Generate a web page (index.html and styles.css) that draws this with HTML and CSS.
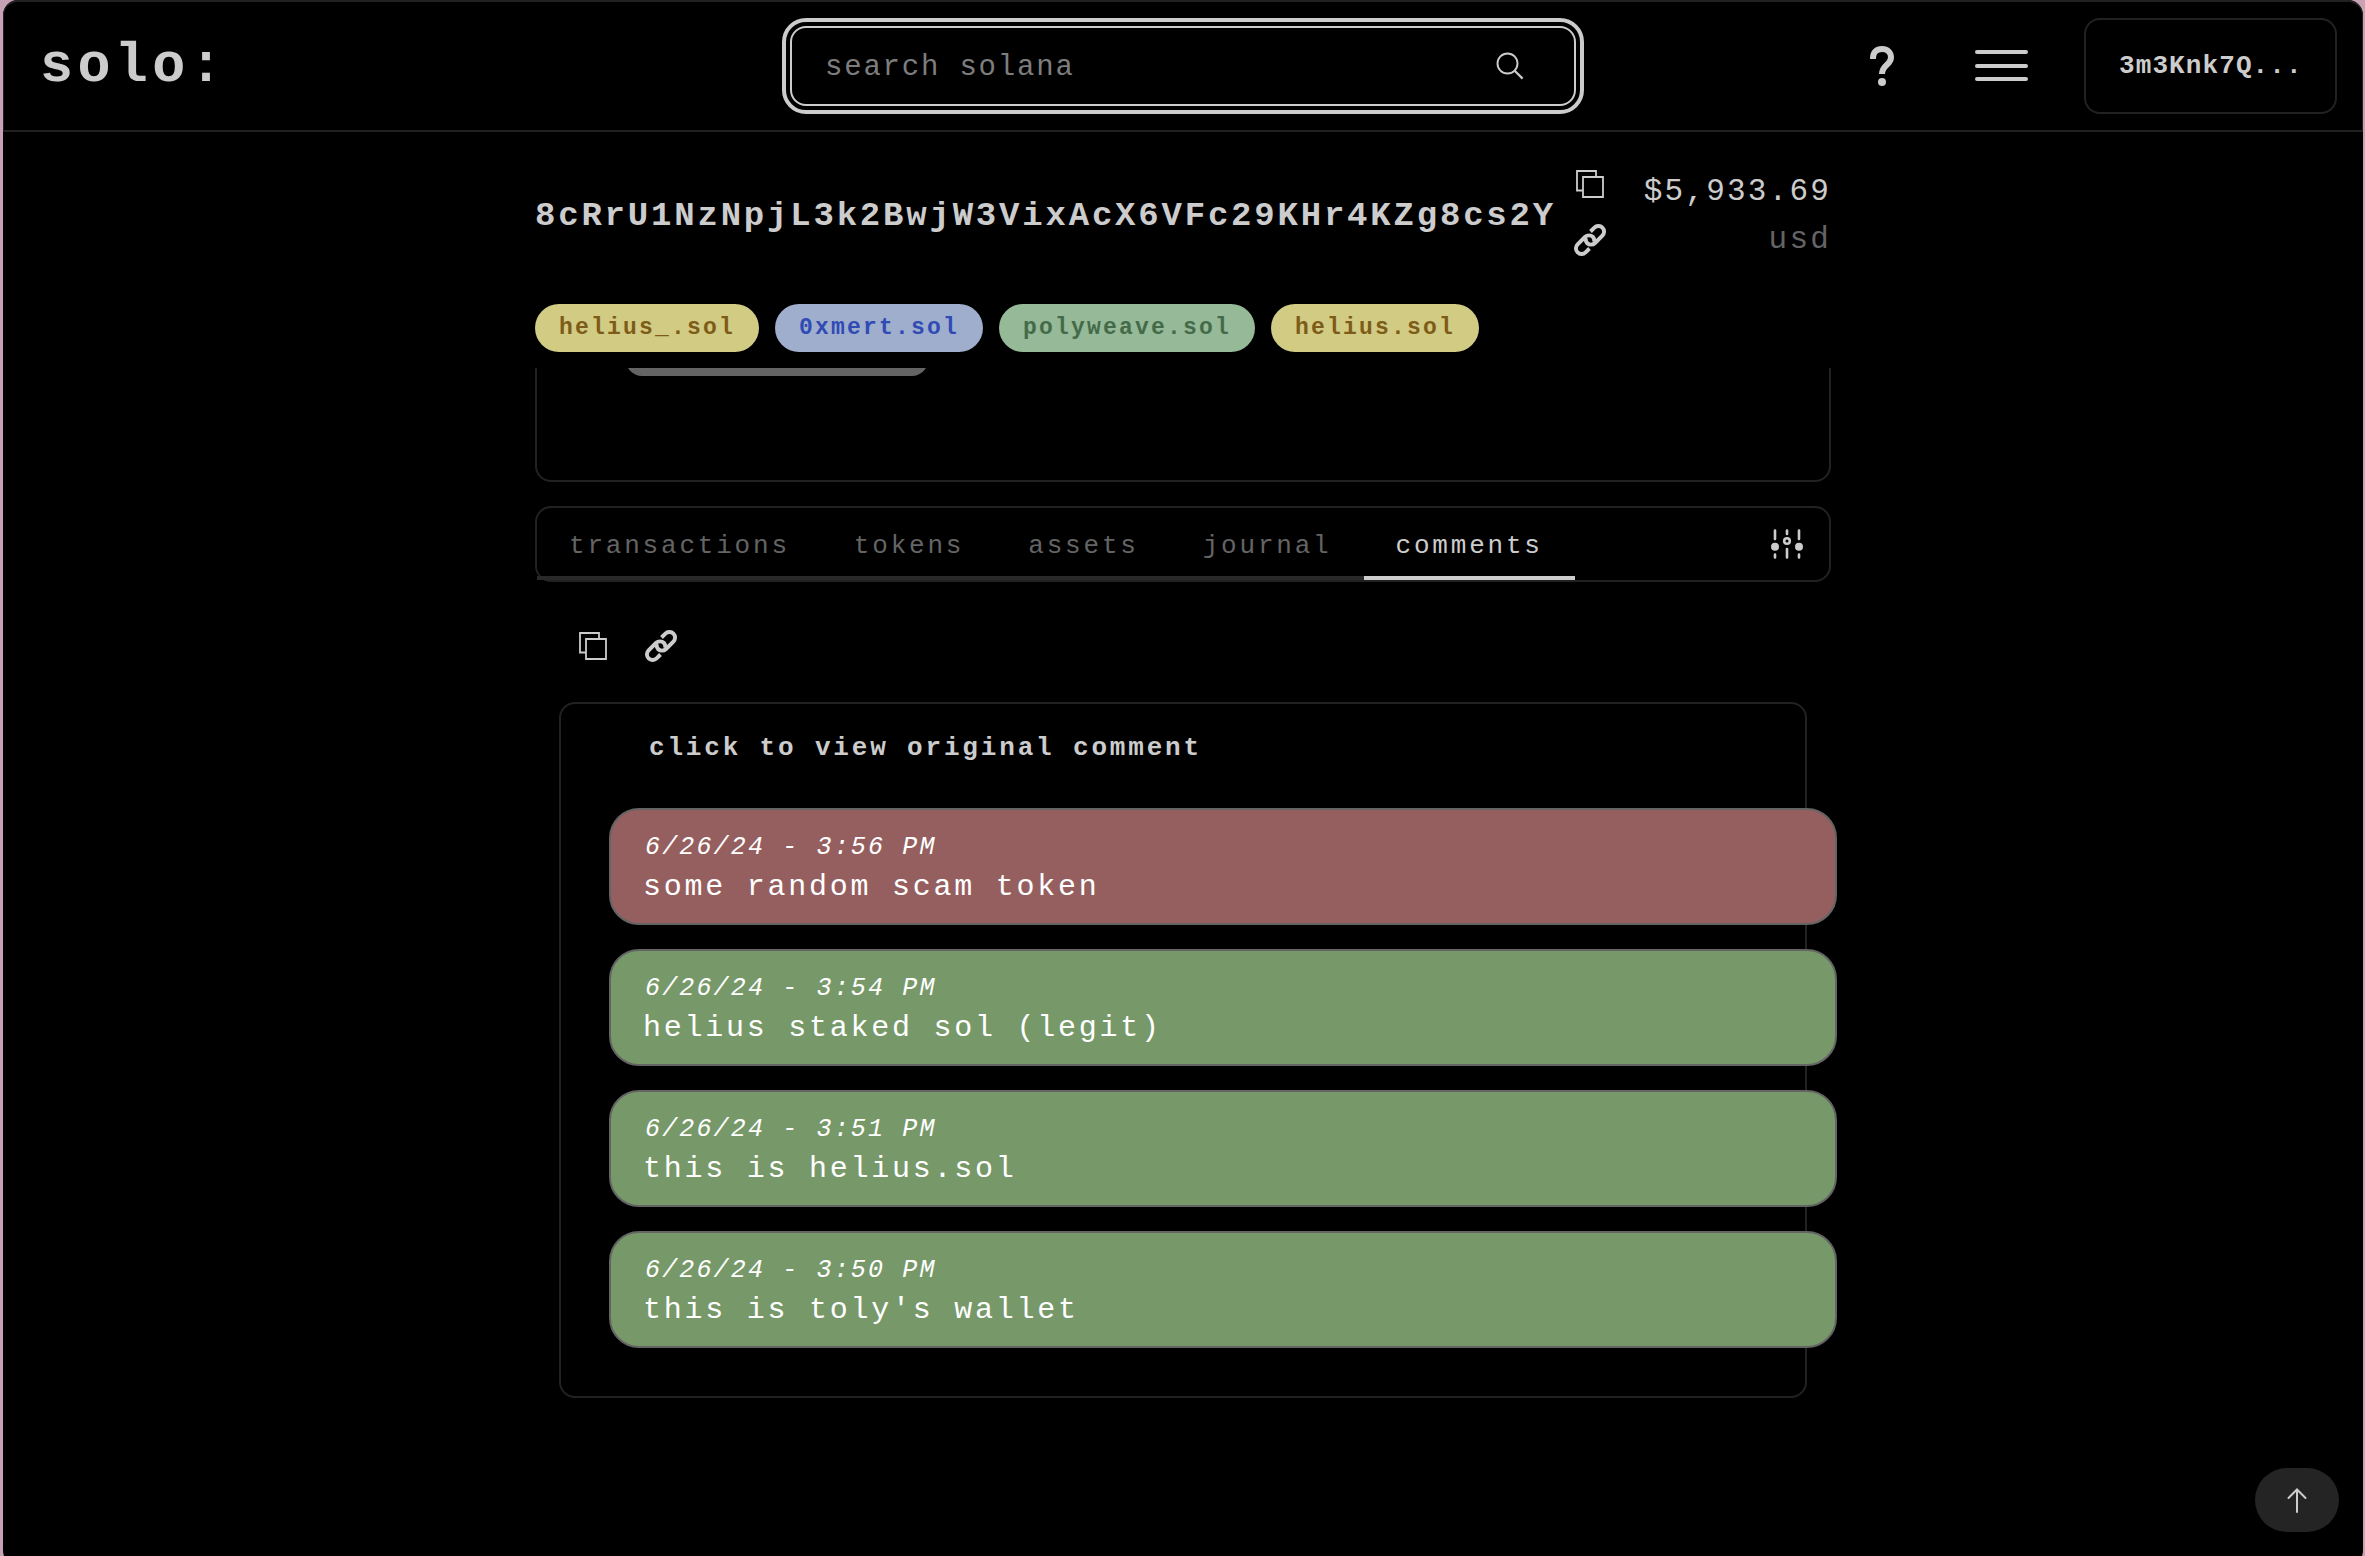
FILE: index.html
```html
<!DOCTYPE html>
<html lang="en">
<head>
<meta charset="utf-8">
<title>solo:</title>
<link rel="stylesheet" href="styles.css">
</head>
<body>
<svg class="sprite" aria-hidden="true">
  <symbol id="copy" viewBox="0 0 28 28"><path d="M7 20.500H1V1H20V7M7 7H27V27H7Z" fill="none" stroke="currentColor" stroke-width="1.8"/></symbol>
  <symbol id="link" viewBox="0 0 32 32"><path d="M15.500 24.500L11.600 28.400A5.650 5.650 0 0 1 3.600 20.400L11 13A5.650 5.650 0 0 1 19 13Q21 15.500 19.800 18M16.500 7.500L20.400 3.600A5.650 5.650 0 0 1 28.400 11.600L21 19A5.650 5.650 0 0 1 13 19Q11 16.500 12.200 14" fill="none" stroke="currentColor" stroke-width="3.900"/></symbol>
</svg>
<div class="window">
  <header class="header">
    <div class="logo">solo:</div>
    <div class="search">
      <div class="search-inner">
        <span class="placeholder">search solana</span>
        <svg class="search-icon" viewBox="0 0 28 28"><circle cx="11.5" cy="11.5" r="10" fill="none" stroke="currentColor" stroke-width="1.9"/><path d="M18.7 18.7L26.6 26.6" stroke="currentColor" stroke-width="2.2"/></svg>
      </div>
    </div>
    <nav class="actions">
      <svg class="help" viewBox="0 0 24 40"><path d="M3 13V12C3 6.500 6.500 3 12 3S21 6.500 21 11.500C21 19 12 18.500 12 28" fill="none" stroke="currentColor" stroke-width="6"/><circle cx="12" cy="36" r="4" fill="currentColor"/></svg>
      <div class="menu"><i></i><i></i><i></i></div>
      <div class="wallet">3m3Knk7Q...</div>
    </nav>
  </header>
  <main class="main">
    <section class="account">
      <h1 class="address">8cRrU1NzNpjL3k2BwjW3VixAcX6VFc29KHr4KZg8cs2Y</h1>
      <div class="account-icons">
        <svg class="icon-copy"><use href="#copy"/></svg>
        <svg class="icon-link"><use href="#link"/></svg>
      </div>
      <div class="balance"><div>$5,933.69</div><div class="unit">usd</div></div>
    </section>
    <section class="tags">
      <span class="tag yellow">helius_.sol</span>
      <span class="tag blue">0xmert.sol</span>
      <span class="tag green">polyweave.sol</span>
      <span class="tag yellow">helius.sol</span>
    </section>
    <section class="overview"><div class="overview-clip"><div class="bar"></div></div></section>
    <nav class="tabs">
      <span class="tab">transactions</span><span class="tab">tokens</span><span class="tab">assets</span><span class="tab">journal</span><span class="tab active">comments</span>
      <svg class="sliders" viewBox="0 0 32 30"><g stroke="currentColor" stroke-width="2.600" stroke-linecap="round" fill="none"><path d="M4 1.500V10M4 25.500V28.500M16 1.500V5M16 20V28.500M28 1.500V10M28 25.500V28.500"/><circle cx="16" cy="12" r="2.800"/></g><circle cx="4" cy="17.800" r="4" fill="currentColor"/><circle cx="28" cy="17.800" r="4" fill="currentColor"/></svg>
    </nav>
    <div class="tools">
      <svg class="icon-copy"><use href="#copy"/></svg>
      <svg class="icon-link"><use href="#link"/></svg>
    </div>
    <section class="comments">
      <h2 class="hint">click to view original comment</h2>
      <article class="comment bad"><time>6/26/24 - 3:56 PM</time><p>some random scam token</p></article>
      <article class="comment"><time>6/26/24 - 3:54 PM</time><p>helius staked sol (legit)</p></article>
      <article class="comment"><time>6/26/24 - 3:51 PM</time><p>this is helius.sol</p></article>
      <article class="comment"><time>6/26/24 - 3:50 PM</time><p>this is toly's wallet</p></article>
    </section>
  </main>
  <button class="to-top" aria-label="scroll to top"><svg viewBox="0 0 20 25"><path d="M10 24V2M1.500 10L10 1.500L18.500 10" fill="none" stroke="currentColor" stroke-width="2" stroke-linecap="round"/></svg></button>
</div>
</body>
</html>
```
FILE: styles.css
```css
* { box-sizing: border-box; margin: 0; padding: 0; }
body {
  width: 2365px; height: 1556px; overflow: hidden;
  padding: 0 2px 0 3px; background: #c6a2b4; color: #ccc;
  font-family: "Liberation Mono", "Courier New", monospace;
}
svg { display: block; flex: none; }
.sprite { position: absolute; width: 0; height: 0; }
.window { position: relative; height: 1570px; background: #000; border-radius: 15px 15px 20px 20px; overflow: hidden; }
.header {
  display: grid; grid-template-columns: 1fr 802px 1fr; align-items: center;
  height: 132px; border: 2px solid #222; border-radius: 15px 15px 0 0;
  border-left-width: 1px; border-right-width: 1px;
}
.logo { padding: 2px 0 0 36px; font-size: 55px; font-weight: 700; letter-spacing: 4.4px; line-height: 64px; }
.search { height: 96px; border: 4px solid #ccc; border-radius: 24px; padding: 4px; }
.search-inner {
  display: flex; align-items: center; justify-content: space-between; height: 80px;
  border: 2px solid #ccc; border-radius: 16px; padding: 0 50px 0 33px;
}
.placeholder { font-size: 29px; letter-spacing: 1.8px; line-height: 40px; padding-top: 4px; color: #7d7d7d; }
.search-icon { width: 28px; height: 28px; }
.actions { display: flex; align-items: center; justify-content: flex-end; padding-right: 25px; }
.help { width: 24px; height: 40px; margin-right: 81px; }
.menu { display: flex; flex-direction: column; gap: 9.5px; width: 53px; margin: 0 56px 1px 0; }
.menu i { height: 4px; border-radius: 2px; background: #ccc; }
.wallet {
  width: 253px; height: 96px; border: 2px solid #222; border-radius: 16px; padding-left: 33px;
  font-size: 26px; font-weight: 700; letter-spacing: 1.1px; line-height: 92px;
}
.main { width: 1296px; margin-left: 532px; }
.account { display: flex; height: 172px; padding-top: 32px; }
.address { width: 1038px; font-size: 34px; letter-spacing: 2.8px; line-height: 40px; margin-top: 32px; white-space: nowrap; }
.account-icons { width: 34px; padding-top: 6px; display: flex; flex-direction: column; align-items: center; }
.icon-copy { width: 28px; height: 28px; }
.icon-link { width: 32px; height: 32px; }
.account-icons .icon-link { margin-top: 26px; }
.balance { flex: 1; text-align: right; font-size: 31px; letter-spacing: 2.2px; line-height: 48px; padding-top: 4px; }
.unit { color: #646464; }
.tags { display: flex; gap: 16px; height: 64px; }
.tag { height: 48px; border-radius: 24px; padding: 0 24px; font-size: 23px; font-weight: 700; letter-spacing: 2.2px; line-height: 48px; }
.yellow { background: #d1cb83; color: #7d5c17; }
.blue { background: #9faecd; color: #304bb4; }
.green { background: #96b998; color: #446b49; }
.overview { height: 114px; border: 2px solid #222; border-top: 0; border-radius: 0 0 16px 16px; padding-left: 89px; }
.overview-clip { height: 8px; overflow: hidden; display: flex; align-items: flex-end; }
.bar { flex: none; width: 302px; height: 32px; border-radius: 16px; background: #646464; }
.tabs { display: flex; height: 76px; margin-top: 24px; border: 2px solid #222; border-radius: 16px; }
.tab {
  height: 72px; padding: 0 32px; border-bottom: 4px solid #292929;
  font-size: 26px; letter-spacing: 2.8px; line-height: 76px; color: #646464;
}
.tab.active { color: #ccc; border-color: #ccc; }
.sliders { width: 32px; height: 30px; margin: 21px 26px 0 auto; }
.tools { display: flex; align-items: center; gap: 38px; height: 120px; padding: 8px 0 0 44px; }
.comments { width: 1248px; height: 696px; margin-left: 24px; border: 2px solid #222; border-radius: 16px; padding-left: 48px; }
.hint { padding-left: 40px; height: 104px; padding-top: 24px; font-size: 26px; letter-spacing: 2.83px; line-height: 40px; }
.comment {
  width: 1228px; height: 117px; margin-bottom: 24px; padding: 16px 0 0 32px;
  border: 2px solid #646464; border-radius: 30px; background: #77996a; color: #fff;
}
.comment.bad { background: #965f5f; }
.comment time { display: block; padding-left: 2px; font-size: 25px; font-style: italic; letter-spacing: 2.15px; line-height: 44px; }
.comment p { font-size: 30px; letter-spacing: 2.75px; line-height: 34px; }
.to-top {
  position: absolute; left: 2252px; top: 1468px; width: 84px; height: 64px; border: 0; border-radius: 32px;
  background: #242424; color: #ccc; display: flex; align-items: center; justify-content: center;
}
.to-top svg { width: 20px; height: 25px; }
```
